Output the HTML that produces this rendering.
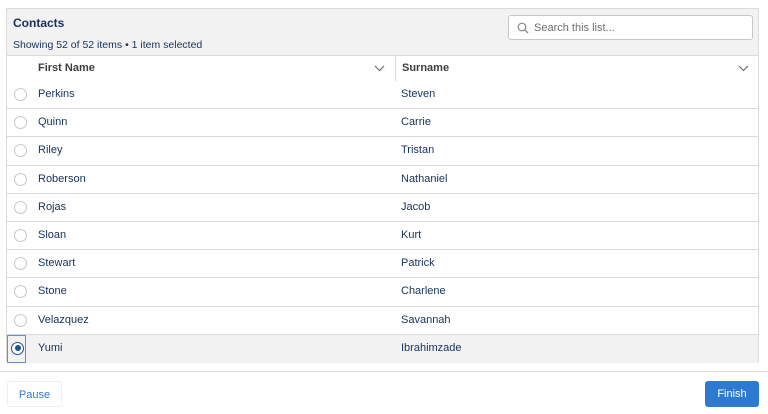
<!DOCTYPE html>
<html><head><style>
*{box-sizing:border-box;margin:0;padding:0}
body{width:768px;height:414px;background:#fff;font-family:"Liberation Sans",sans-serif;font-size:11px;color:#16325c;position:relative;overflow:hidden}
.card{position:absolute;left:6px;top:8px;width:753px;height:354px;border:1px solid #dddbda;background:#fff}
.hd{position:absolute;left:0;top:0;width:100%;height:47px;background:#f3f2f2;border-bottom:1px solid #dddbda}
.t{position:absolute;left:6px;top:7px;font-weight:bold;font-size:12px;color:#16325c}
.s{position:absolute;left:6px;top:30px;font-size:10.5px;color:#16325c}
.srch{position:absolute;left:501px;top:6px;width:245px;height:25px;background:#fff;border:1px solid #c9c7c5;border-radius:3px;color:#706e6b;font-size:11px;padding:6px 0 0 25px}
.srch svg{position:absolute;left:8px;top:6px}
.ch{position:absolute;top:47px;height:25px;font-weight:bold;color:#3e3e3c;font-size:11px;padding-top:6px}
.row{position:absolute;left:0;width:100%;height:28.2px;border-bottom:1px solid #dddbda}
.row span{position:absolute;top:7px}
.r{position:absolute;left:7px;top:7px;width:13px;height:13px;border:1px solid #c9c7c5;border-radius:50%;background:#fff}
.sel{background:#f3f2f2}
.btn{position:absolute;top:381px;height:26px;border-radius:3px;font-size:11px;text-align:center;padding-top:7px}
</style></head><body>
<div class="card">
<div class="hd"><div class="t">Contacts</div><div class="s">Showing 52 of 52 items • 1 item selected</div>
<div class="srch"><svg width="12" height="12" viewBox="0 0 12 12"><circle cx="5" cy="5" r="3.8" fill="none" stroke="#8a8886" stroke-width="1.2"/><path d="M7.8 7.8L11 11" stroke="#8a8886" stroke-width="1.3"/></svg>Search this list...</div></div>
<div class="ch" style="left:31px">First Name</div>
<svg style="position:absolute;left:367px;top:56px" width="11" height="7"><path d="M1 1l4.5 4.5L10 1" fill="none" stroke="#706e6b" stroke-width="1.2"/></svg>
<div style="position:absolute;left:388px;top:47px;width:1px;height:25px;background:#dddbda"></div>
<div class="ch" style="left:395px">Surname</div>
<svg style="position:absolute;left:731px;top:56px" width="11" height="7"><path d="M1 1l4.5 4.5L10 1" fill="none" stroke="#706e6b" stroke-width="1.2"/></svg>
<div class="row" style="top:72px"><div class="r"></div><span style="left:31px">Perkins</span><span style="left:394px">Steven</span></div>
<div class="row" style="top:100.2px"><div class="r"></div><span style="left:31px">Quinn</span><span style="left:394px">Carrie</span></div>
<div class="row" style="top:128.4px"><div class="r"></div><span style="left:31px">Riley</span><span style="left:394px">Tristan</span></div>
<div class="row" style="top:156.6px"><div class="r"></div><span style="left:31px">Roberson</span><span style="left:394px">Nathaniel</span></div>
<div class="row" style="top:184.8px"><div class="r"></div><span style="left:31px">Rojas</span><span style="left:394px">Jacob</span></div>
<div class="row" style="top:213px"><div class="r"></div><span style="left:31px">Sloan</span><span style="left:394px">Kurt</span></div>
<div class="row" style="top:241.2px"><div class="r"></div><span style="left:31px">Stewart</span><span style="left:394px">Patrick</span></div>
<div class="row" style="top:269.4px"><div class="r"></div><span style="left:31px">Stone</span><span style="left:394px">Charlene</span></div>
<div class="row" style="top:297.6px"><div class="r"></div><span style="left:31px">Velazquez</span><span style="left:394px">Savannah</span></div>
<div class="row sel" style="top:325.8px;border-bottom:none"><div style="position:absolute;left:0;top:0;width:19px;height:28px;border:1px solid #5b8fd6"></div><div class="r" style="left:4px;border-color:#1b5297"><div style="position:absolute;left:2.5px;top:2.5px;width:6px;height:6px;border-radius:50%;background:#1b5297"></div></div><span style="left:31px">Yumi</span><span style="left:394px">Ibrahimzade</span></div>
</div>
<div style="position:absolute;left:0;top:371px;width:768px;height:1px;background:#dddbda"></div>
<div class="btn" style="left:7px;width:55px;border:1px solid #eeeeee;color:#2e7ad1">Pause</div>
<div class="btn" style="left:705px;width:54px;background:#2e7ad1;color:#fff">Finish</div>
</body></html>
